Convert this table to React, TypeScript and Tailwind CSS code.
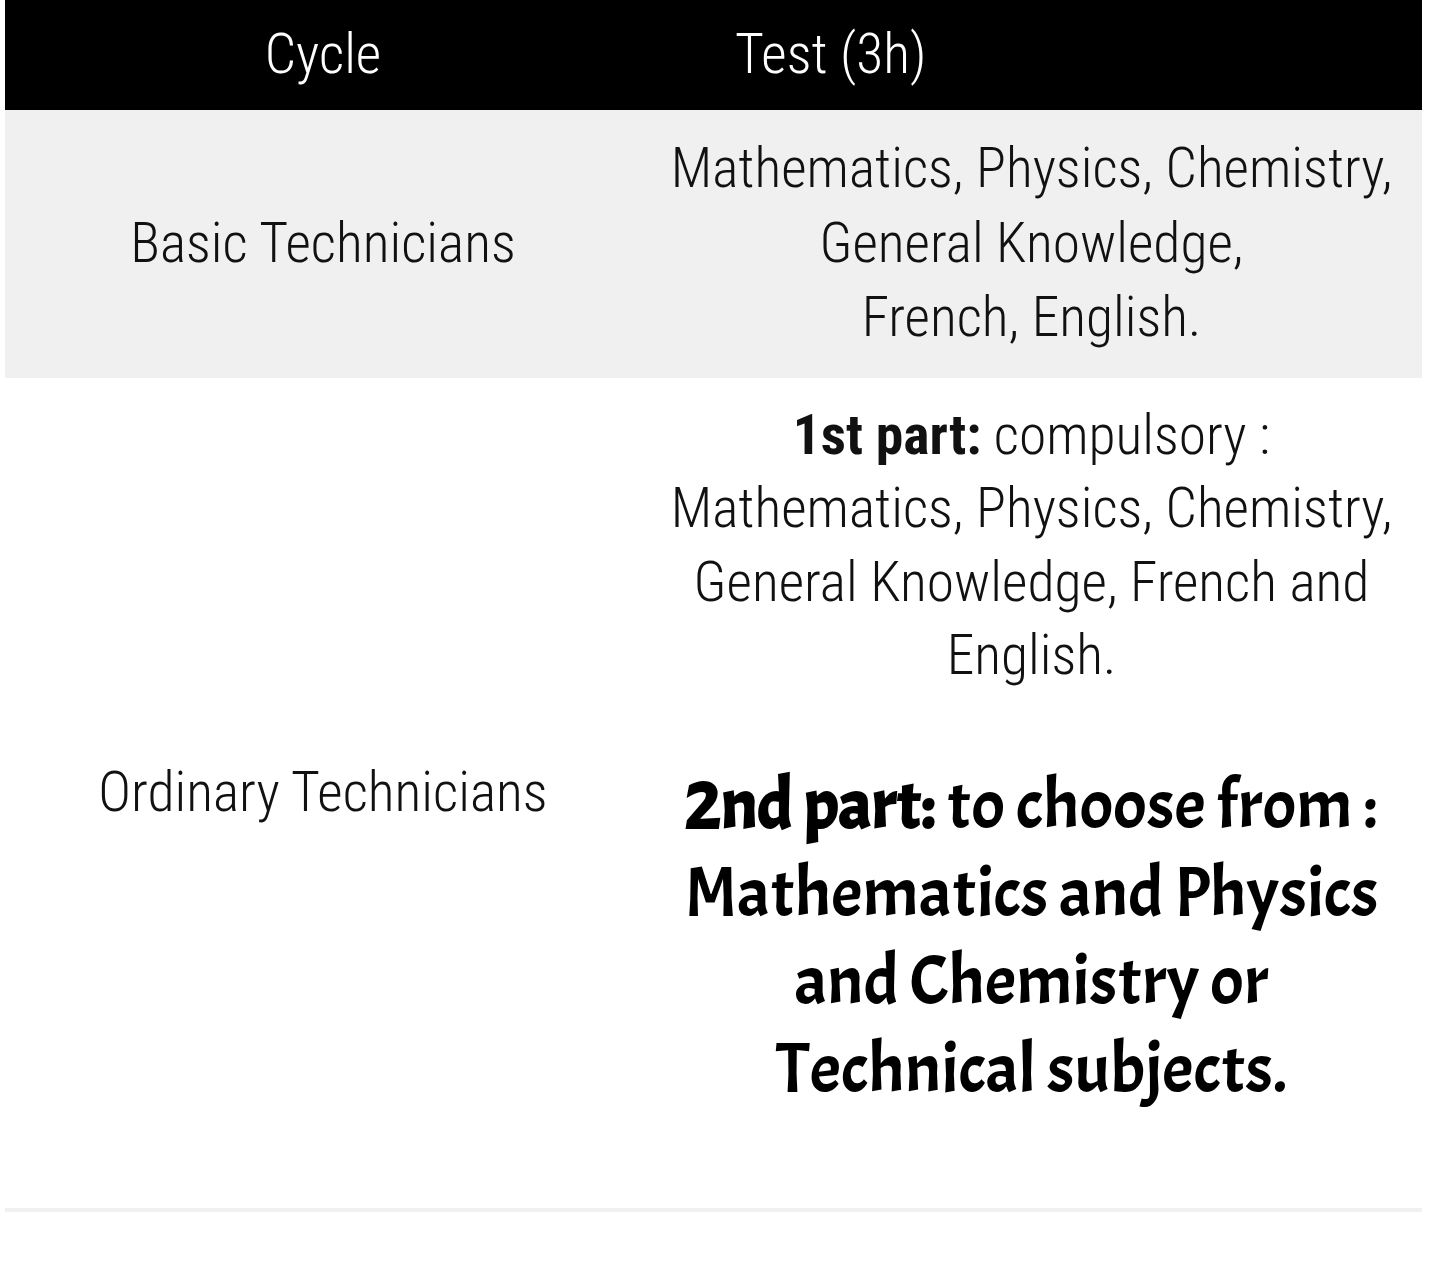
import React from 'react';

const thin = "font-['Roboto_Condensed','Roboto',sans-serif] font-light";
const heavy = "font-['Acme','Open_Sans',sans-serif] font-normal";

export default function App() {
  return (
    <div className="min-h-screen bg-white">
      <div className="ml-[5px] w-[1417px]">
        {/* Header */}
        <div className={`grid grid-cols-[636px_781px] h-[110px] items-center bg-black text-white text-[55.5px] ${thin}`}>
          <div className="text-center">Cycle</div>
          <div className="pl-[94px]">Test (3h)</div>
        </div>

        {/* Basic row */}
        <div className={`grid grid-cols-[636px_781px] items-center bg-[#f0f0f0] text-[#111] text-[55.5px] leading-[74.5px] ${thin}`}>
          <div className="text-center">Basic Technicians</div>
          <div className="py-[22px] text-center whitespace-nowrap">
            Mathematics, Physics, Chemistry,
            <br />
            General Knowledge,
            <br />
            French, English.
          </div>
        </div>

        {/* Ordinary row */}
        <div className="grid grid-cols-[636px_781px] items-center border-b-4 border-[#f0f0f0] text-[#111]">
          <div className={`text-center text-[55.5px] ${thin}`}>Ordinary Technicians</div>
          <div className="pt-[21px] pb-[95px] text-center whitespace-nowrap">
            <p className={`text-[55.5px] leading-[73.5px] ${thin}`}>
              <strong className="font-bold">1st part:</strong> compulsory :
              <br />
              Mathematics, Physics, Chemistry,
              <br />
              General Knowledge, French and
              <br />
              English.
            </p>
            <p className={`mt-[68px] text-[70px] leading-[88px] text-black ${heavy}`}>
              <strong className="font-bold">2nd part:</strong> to choose from :
              <br />
              Mathematics and Physics
              <br />
              and Chemistry or
              <br />
              Technical subjects.
            </p>
          </div>
        </div>
      </div>
    </div>
  );
}
